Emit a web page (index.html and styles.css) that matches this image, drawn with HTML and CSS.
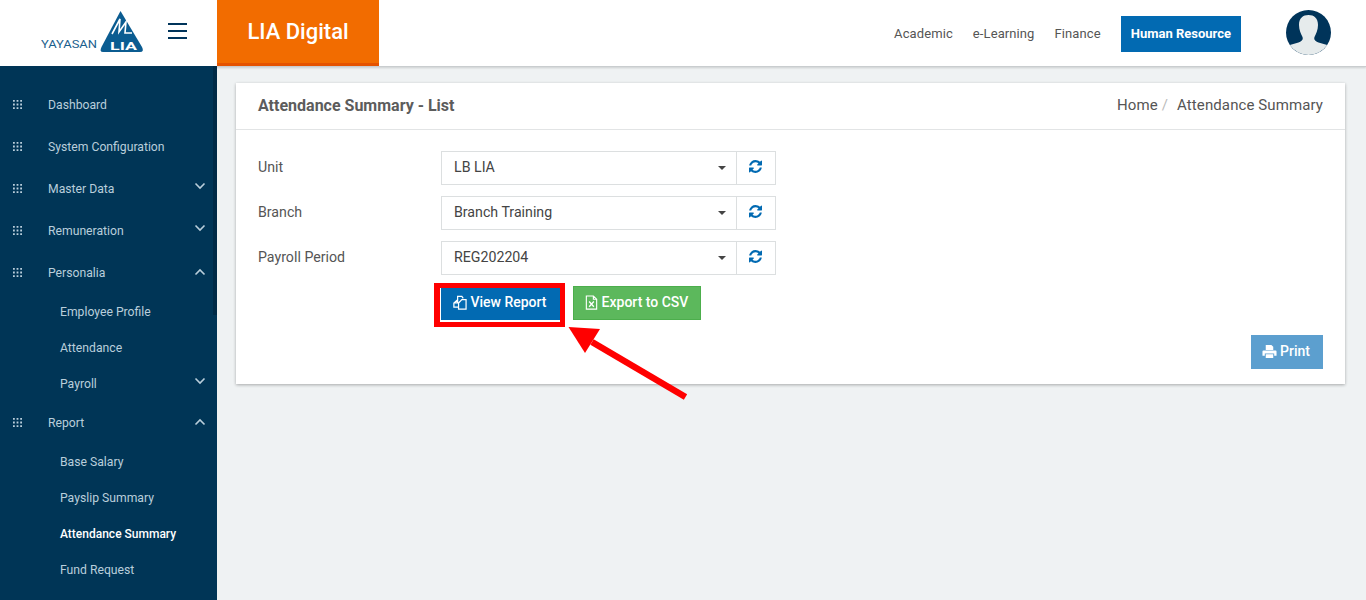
FILE: index.html
```html
<!DOCTYPE html>
<html>
<head>
    <title>Attendance Summary - List</title>
    <link rel="stylesheet" href="styles.css">
</head>
<body>
    <svg class="defs" width="0" height="0">
        <symbol id="grid" viewBox="0 0 10 10">
            <path d="M0 0h2v2H0zM4 0h2v2H4zM8 0h2v2H8zM0 4h2v2H0zM4 4h2v2H4zM8 4h2v2H8zM0 8h2v2H0zM4 8h2v2H4zM8 8h2v2H8z" fill="currentColor"/>
        </symbol>
        <symbol id="down" viewBox="0 0 12 8">
            <path d="M1.500 1.500l4.500 4.500 4.500-4.500" fill="none" stroke="currentColor" stroke-width="1.600"/>
        </symbol>
        <symbol id="up" viewBox="0 0 12 8">
            <path d="M1.500 6.500l4.500-4.500 4.500 4.500" fill="none" stroke="currentColor" stroke-width="1.600"/>
        </symbol>
        <symbol id="refresh" viewBox="0 0 1536 1536">
            <path fill="currentColor" d="M1511 928q0 5-1 7-64 268-268 434.500t-478 166.500q-146 0-282.500-55t-243.500-157l-129 129q-19 19-45 19t-45-19-19-45v-448q0-26 19-45t45-19h448q26 0 45 19t19 45-19 45l-137 137q71 66 161 102t187 36q134 0 250-65t186-179q11-17 53-117 8-23 30-23h192q13 0 22.500 9.500t9.500 22.500zM1536 128v448q0 26-19 45t-45 19h-448q-26 0-45-19t-19-45 19-45l138-138q-148-137-349-137-134 0-250 65t-186 179q-11 17-53 117-8 23-30 23h-199q-13 0-22.500-9.500t-9.500-22.500v-7q65-268 270-434.500t480-166.500q146 0 284 55.500t245 156.500l130-129q19-19 45-19t45 19 19 45z"/>
        </symbol>
    </svg>

    <header class="topbar">
        <div class="logo-box">
            <svg class="logo" width="104" height="44" viewBox="0 0 104 44">
                <text x="0" y="38" class="logo-small" textLength="56" lengthAdjust="spacingAndGlyphs">YAYASAN</text>
                <path d="M79.500 1 L101 37 Q103.500 42 99 42 L62 42 Q58 42 60.500 37 Z" fill="#0b5c91"/>
                <path d="M71 24 L79 9 L78 22 L85 12 L84 23 H91" fill="none" stroke="#fff" stroke-width="1.600"/>
                <text x="69" y="40" class="logo-big" textLength="27" lengthAdjust="spacingAndGlyphs">LIA</text>
            </svg>
            <div class="burger"><i></i><i></i><i></i></div>
        </div>
        <div class="brand">LIA Digital</div>
        <nav class="topnav">
            <a>Academic</a>
            <a>e-Learning</a>
            <a>Finance</a>
            <a class="active">Human Resource</a>
        </nav>
        <svg class="avatar" width="45" height="45" viewBox="0 0 45 45">
            <circle cx="22.500" cy="22.500" r="22.500" fill="#00345a"/>
            <path d="M13 15C13 8 17 5 22.500 5S32 8 32 15C32 20 30 24 28.500 27C27.500 30 29.500 31 32.500 32.500L41.200 35A22.500 22.500 0 0 1 3.800 35L12.500 32.500C15.500 31 17.500 30 16.500 27C15 24 13 20 13 15Z" fill="#e6ebec"/>
        </svg>
    </header>

    <div class="layout">
        <aside class="sidebar">
            <div class="side-scroll"></div>
            <a class="menu"><svg class="grid"><use href="#grid"/></svg>Dashboard</a>
            <a class="menu"><svg class="grid"><use href="#grid"/></svg>System Configuration</a>
            <a class="menu"><svg class="grid"><use href="#grid"/></svg>Master Data<svg class="chev chev-down"><use href="#down"/></svg></a>
            <a class="menu"><svg class="grid"><use href="#grid"/></svg>Remuneration<svg class="chev chev-down"><use href="#down"/></svg></a>
            <a class="menu"><svg class="grid"><use href="#grid"/></svg>Personalia<svg class="chev"><use href="#up"/></svg></a>
            <a class="sub">Employee Profile</a>
            <a class="sub">Attendance</a>
            <a class="sub">Payroll<svg class="chev chev-down"><use href="#down"/></svg></a>
            <a class="menu"><svg class="grid"><use href="#grid"/></svg>Report<svg class="chev"><use href="#up"/></svg></a>
            <a class="sub">Base Salary</a>
            <a class="sub">Payslip Summary</a>
            <a class="sub current">Attendance Summary</a>
            <a class="sub">Fund Request</a>
        </aside>

        <main class="content">
            <section class="card">
                <div class="card-head">
                    <h1>Attendance Summary - List</h1>
                    <div class="crumbs">Home<span class="slash">/</span>Attendance Summary</div>
                </div>
                <div class="card-body">
                    <div class="form-row">
                        <label>Unit</label>
                        <div class="select"><span>LB LIA</span><b class="caret"></b></div>
                        <div class="addon"><svg class="icon"><use href="#refresh"/></svg></div>
                    </div>
                    <div class="form-row">
                        <label>Branch</label>
                        <div class="select"><span>Branch Training</span><b class="caret"></b></div>
                        <div class="addon"><svg class="icon"><use href="#refresh"/></svg></div>
                    </div>
                    <div class="form-row">
                        <label>Payroll Period</label>
                        <div class="select"><span>REG202204</span><b class="caret"></b></div>
                        <div class="addon"><svg class="icon"><use href="#refresh"/></svg></div>
                    </div>
                    <div class="actions">
                        <a class="btn btn-blue">
                            <svg class="btn-icon" viewBox="0 0 16 16"><path d="M6 5V1.500H10.500L12 3.500M6 5L2 8.500V13H7M6 5V8.500H2M7 8.500L10.500 5H15V15H7z" fill="none" stroke="currentColor" stroke-width="1.300"/></svg>View Report
                            <span class="highlight"></span>
                        </a>
                        <a class="btn btn-green">
                            <svg class="btn-icon" viewBox="0 0 16 16"><path d="M2.500 1h7.500l3.500 3.500V15h-11zM10 1v3.500h3.500" fill="none" stroke="currentColor" stroke-width="1.200"/><path d="M5.500 7l5 5.500M10.500 7l-5 5.500" stroke="currentColor" stroke-width="1.400"/></svg>Export to CSV
                        </a>
                    </div>
                    <div class="print-row">
                        <a class="btn btn-print">
                            <svg class="btn-icon" viewBox="0 0 16 16"><path fill="currentColor" d="M4 1h6l2 2v3.500H4zM1.500 7h13a1 1 0 0 1 1 1v4.500H13V10H3v2.500H.5V8a1 1 0 0 1 1-1zM4 11h8v4H4z"/></svg>Print
                        </a>
                    </div>
                </div>
            </section>
        </main>
    </div>

    <svg class="arrow" width="130" height="80" viewBox="0 0 130 80">
        <path d="M117.500 71 L24 16" stroke="#f00" stroke-width="6.500"/>
        <path d="M.500 1 L32 3 L17 27 Z" fill="#f00"/>
    </svg>
</body>
</html>
```

FILE: styles.css
```css
* {
    box-sizing: border-box;
}

html, body {
    height: 600px;
    overflow: hidden;
}

body {
    margin: 0;
    font-family: Roboto, "Liberation Sans", sans-serif;
    font-size: 14px;
    color: #555;
    background-color: #eff2f3;
}

.defs {
    position: absolute;
}

/* top bar */
.topbar {
    display: flex;
    align-items: center;
    height: 67px;
    background-color: #fff;
    border-bottom: 1px solid #c9cdcf;
    box-shadow: 0 1px 2px rgba(0, 0, 0, 0.15);
    position: relative;
}

.logo-box {
    display: flex;
    width: 217px;
    height: 66px;
    padding: 10px 0 0 41px;
}

.logo {
    flex: none;
}

.logo-small {
    font-size: 11.500px;
    fill: #1d5f8e;
}

.logo-big {
    font-size: 11px;
    font-weight: 700;
    fill: #fff;
}

.burger {
    margin: 13px 0 0 23px;
}

.burger i {
    display: block;
    width: 19px;
    height: 2px;
    margin-bottom: 5px;
    background-color: #00345a;
}

.brand {
    width: 162px;
    height: 66px;
    align-self: flex-start;
    text-align: center;
    font-size: 22px;
    font-weight: 500;
    line-height: 64px;
    color: #fff;
    background-color: #f26c00;
    border-bottom: 3px solid #e55300;
}

.topnav {
    display: flex;
    align-items: center;
    margin-left: auto;
    font-size: 13px;
    color: #555;
}

.topnav a {
    margin-left: 20px;
    letter-spacing: 0.1px;
}

.topnav .active {
    height: 36px;
    margin-top: 2px;
    padding: 0 10px;
    line-height: 35px;
    font-weight: 700;
    letter-spacing: 0;
    color: #fff;
    background-color: #026ab2;
}

.avatar {
    margin: -1px 35px 0 45px;
}

/* sidebar */
.layout {
    display: flex;
    height: 533px;
}

.sidebar {
    position: relative;
    width: 217px;
    margin-top: -1px;
    padding-top: 18px;
    font-size: 12.200px;
    color: #b9cedb;
    background-color: #003556;
    z-index: 1;
}

.side-scroll {
    position: absolute;
    top: 0;
    right: 0;
    width: 4px;
    height: 249px;
    background-color: #002a46;
}

.menu {
    display: flex;
    align-items: center;
    height: 42px;
    padding-left: 13px;
}

.sub {
    display: flex;
    align-items: center;
    height: 36px;
    padding-left: 60px;
}

.current {
    font-size: 12px;
    font-weight: 500;
    color: #fff;
}

.grid {
    width: 9px;
    height: 9px;
    margin: -2px 26px 0 0;
}

.chev {
    width: 12px;
    height: 8px;
    margin: -3px 11px 0 auto;
}

.chev-down {
    margin-top: -6px;
}

/* card */
.content {
    flex: 1;
    padding: 16px 21px 0 19px;
}

.card {
    height: 301px;
    background-color: #fff;
    box-shadow: 0 1px 3px rgba(0, 0, 0, 0.3);
}

.card-head {
    display: flex;
    align-items: center;
    justify-content: space-between;
    height: 47px;
    padding: 0 22px 2px;
    border-bottom: 1px solid #e2e4e5;
}

.card-head h1 {
    margin: 0;
    font-size: 16px;
    font-weight: 700;
    color: #5c5c5c;
}

.crumbs {
    font-size: 15px;
    letter-spacing: 0.1px;
    color: #555;
}

.slash {
    margin: 0 9px 0 4px;
    color: #bbb;
}

.card-body {
    padding: 21px 22px 0;
}

.form-row {
    display: flex;
    height: 34px;
    margin-bottom: 11px;
}

.form-row label {
    width: 183px;
    line-height: 32px;
    font-size: 14.200px;
}

.select {
    position: relative;
    width: 296px;
    padding-left: 12px;
    line-height: 30px;
    border: 1px solid #dcdfe0;
    font-size: 14.200px;
    color: #444;
}

.caret {
    position: absolute;
    top: 14px;
    right: 10px;
    border-top: 4px solid #444;
    border-left: 4px solid transparent;
    border-right: 4px solid transparent;
}

.addon {
    display: flex;
    align-items: center;
    justify-content: center;
    width: 40px;
    margin-left: -1px;
    border: 1px solid #dcdfe0;
    color: #026ab2;
}

.icon {
    width: 13px;
    height: 13px;
    margin: -4px 1px 0 0;
}

.actions {
    display: flex;
    gap: 13px;
    margin-left: 183px;
}

.btn {
    display: flex;
    align-items: center;
    justify-content: center;
    height: 34px;
    padding: 0 2px 2px 0;
    font-size: 14px;
    font-weight: 500;
    color: #fff;
}

.btn-icon {
    flex: none;
    width: 15px;
    height: 15px;
    margin-right: 3px;
}

.btn-blue {
    position: relative;
    width: 119px;
    background-color: #026ab2;
}

.btn-green {
    width: 128px;
    background-color: #5cb85c;
    border: 1px solid #4cae4c;
}

.highlight {
    position: absolute;
    top: -3px;
    left: -7px;
    width: 131px;
    height: 44px;
    border: 5px solid #f00;
    border-left-width: 6px;
}

.print-row {
    display: flex;
    justify-content: flex-end;
    margin-top: 15px;
}

.btn-print {
    width: 72px;
    background-color: #5c9fcf;
}

/* annotation on the screenshot */
.arrow {
    position: absolute;
    top: 326px;
    left: 568px;
}
```
